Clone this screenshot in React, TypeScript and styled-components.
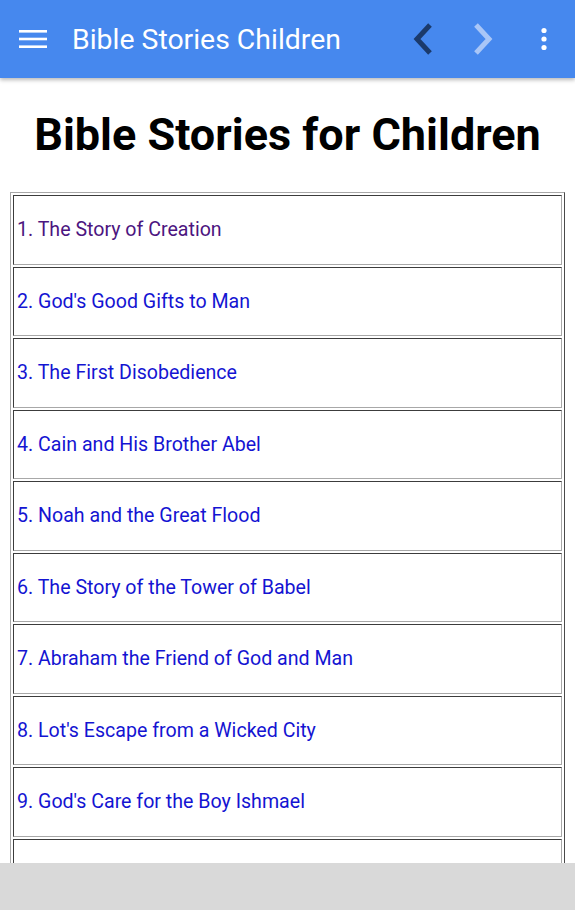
import React from "react";
import styled, { createGlobalStyle } from "styled-components";

const GlobalStyle = createGlobalStyle`
   html, body {
      margin: 0;
      padding: 0;
      height: 100%;
      background: #ffffff;
      font-family: Roboto, "Noto Sans", Arial, sans-serif;
   }
   #root {
      height: 100%;
   }
`;

const Screen = styled.div`
   display: flex;
   flex-direction: column;
   width: 575px;
   height: 910px;
   overflow: hidden;
`;

const Toolbar = styled.header`
   position: relative;
   z-index: 2;
   display: flex;
   align-items: center;
   flex: 0 0 78px;
   background: #4688ee;
   box-shadow: 0 2px 4px rgba(0, 0, 0, 0.28);
   color: #ffffff;
`;

const IconButton = styled.div<{ $width: number }>`
   display: flex;
   align-items: center;
   justify-content: center;
   width: ${(p) => p.$width}px;
   height: 78px;
`;

const ToolbarTitle = styled.h1`
   flex: 1;
   margin: 0 0 0 6px;
   font-size: 28.4px;
   font-weight: 400;
   white-space: nowrap;
`;

const Content = styled.main`
   flex: 1;
   overflow: hidden;
   padding: 0 10px;
`;

const Heading = styled.h2`
   margin: 33px 0 33px;
   text-align: center;
   font-size: 45px;
   font-weight: 700;
   line-height: 48px;
   color: #000000;
   white-space: nowrap;
`;

const StoryTable = styled.table`
   width: 100%;
   border-style: solid;
   border-width: 1px;
   border-color: #a8a8a8 #4a4a4a #4a4a4a #a8a8a8;
   border-spacing: 2px;
`;

const Cell = styled.td`
   height: 67.5px;
   padding: 0 3px;
   border-style: solid;
   border-width: 1px;
   border-color: #3c3c3c #a8a8a8 #a8a8a8 #3c3c3c;
   font-size: 19.6px;
   white-space: nowrap;
`;

const StoryLink = styled.a<{ $visited?: boolean }>`
   color: ${(p) => (p.$visited ? "#4c1580" : "#1414d2")};
   text-decoration: none;
`;

const AdBar = styled.div`
   flex: 0 0 47px;
   background: #d9d9d9;
`;

const stories = [
   "The Story of Creation",
   "God's Good Gifts to Man",
   "The First Disobedience",
   "Cain and His Brother Abel",
   "Noah and the Great Flood",
   "The Story of the Tower of Babel",
   "Abraham the Friend of God and Man",
   "Lot's Escape from a Wicked City",
   "God's Care for the Boy Ishmael",
];

const App = () => {
   return (
      <>
         <GlobalStyle />
         <Screen>
            <Toolbar>
               <IconButton $width={66}>
                  <svg width="28" height="20" viewBox="0 0 28 20">
                     <rect x="0" y="1" width="28" height="2.6" fill="#fff" />
                     <rect x="0" y="8.7" width="28" height="2.6" fill="#fff" />
                     <rect x="0" y="16.4" width="28" height="2.6" fill="#fff" />
                  </svg>
               </IconButton>
               <ToolbarTitle>Bible Stories Children</ToolbarTitle>
               <IconButton $width={60}>
                  <svg width="22" height="34" viewBox="0 0 22 34">
                     <path d="M18 3 L5 17 L18 31" fill="none" stroke="#1b3a6b" strokeWidth="5" />
                  </svg>
               </IconButton>
               <IconButton $width={60}>
                  <svg width="22" height="34" viewBox="0 0 22 34">
                     <path d="M4 3 L17 17 L4 31" fill="none" stroke="#a9c6f7" strokeWidth="5" />
                  </svg>
               </IconButton>
               <IconButton $width={62}>
                  <svg width="8" height="24" viewBox="0 0 8 24">
                     <circle cx="4" cy="3.5" r="2.6" fill="#fff" />
                     <circle cx="4" cy="12" r="2.6" fill="#fff" />
                     <circle cx="4" cy="20.5" r="2.6" fill="#fff" />
                  </svg>
               </IconButton>
            </Toolbar>
            <Content>
               <Heading>Bible Stories for Children</Heading>
               <StoryTable>
                  <tbody>
                     {stories.map((title, index) => (
                        <tr key={index}>
                           <Cell>
                              <StoryLink href="#" $visited={index === 0}>
                                 {index + 1}. {title}
                              </StoryLink>
                           </Cell>
                        </tr>
                     ))}
                     {/* next row starts below the fold */}
                     <tr>
                        <Cell />
                     </tr>
                  </tbody>
               </StoryTable>
            </Content>
            <AdBar />
         </Screen>
      </>
   );
};

export default App;
